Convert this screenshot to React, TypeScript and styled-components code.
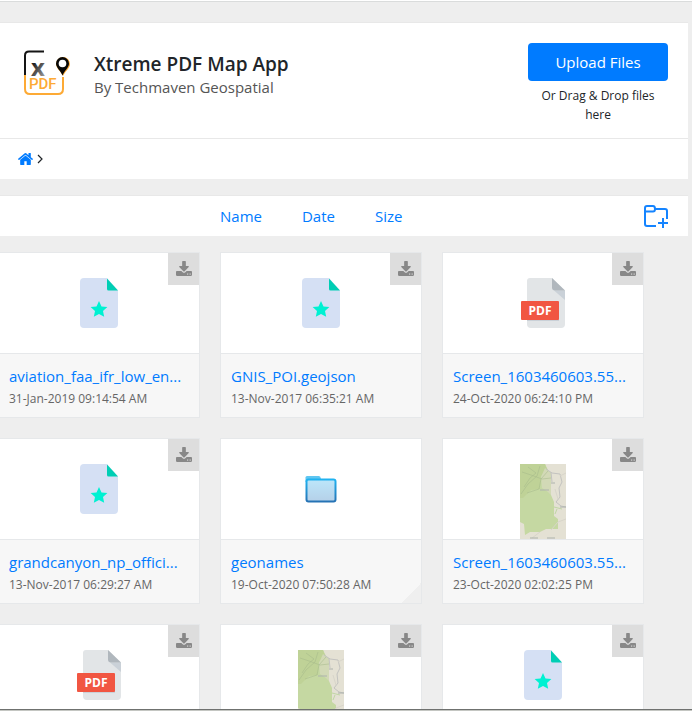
import React from "react";
import styled, { createGlobalStyle } from "styled-components";

const GlobalStyle = createGlobalStyle`
  * { box-sizing: border-box; }
  body {
    margin: 0;
    background: #eee;
    color: #212529;
    font-family: "Segoe UI", "Open Sans", "Noto Sans", sans-serif;
    font-size: 15px;
    line-height: 24px;
  }
  a { color: #007bff; text-decoration: none; }
  svg { display: block; }
`;

const Frame = styled.div`
  height: 100vh;
  display: flex;
  flex-direction: column;
  border-top: 1px solid #fff;
  background: #eee;
`;

const Page = styled.main`
  flex: 1;
  min-height: 0;
  overflow-x: hidden;
  overflow-y: auto;
  scrollbar-width: none;
  border-top: 1px solid #dadcdc;
  border-bottom: 1px solid #6f716f;
  padding-top: 20px;
`;

const StatusEdge = styled.footer`
  height: 1px;
  background: #c4c6c2;
`;

const Panel = styled.section`
  margin-right: 4px;
  margin-bottom: 16px;
  background: #fff;
  border-top: 1px solid #e8e8e8;
`;

const Header = styled.header`
  display: flex;
  align-items: flex-start;
  padding: 20px 20px 14px;
`;

const LogoBox = styled.div`
  width: 50px;
  margin-top: 6px;
  margin-right: 24px;
`;

const Heading = styled.div`
  flex: 1;
  padding-top: 9px;
`;

const Title = styled.h1`
  margin: 0;
  font-size: 19px;
  line-height: 24px;
  font-weight: 600;
`;

const Subtitle = styled.p`
  margin: 0;
  line-height: 22px;
  color: #555;
`;

const UploadColumn = styled.div`
  width: 140px;
  text-align: center;
`;

const UploadButton = styled.button`
  display: block;
  width: 100%;
  height: 38px;
  border: 0;
  border-radius: 4px;
  background: #007bff;
  color: #fff;
  font: inherit;
  cursor: pointer;
`;

const UploadHint = styled.p`
  margin: 5px 0 0;
  padding: 0 8px;
  font-size: 12px;
  line-height: 19px;
`;

const Breadcrumb = styled.nav`
  display: flex;
  align-items: center;
  gap: 4px;
  height: 41px;
  padding: 0 18px;
  border-top: 1px solid #e8e8e8;
`;

const Toolbar = styled.div`
  display: flex;
  align-items: center;
  height: 40px;
  padding: 0 20px 0 220px;
`;

const SortLinks = styled.nav`
  flex: 1;
  display: flex;
  gap: 40px;
`;

const IconButton = styled.button`
  padding: 0;
  border: 0;
  background: none;
  cursor: pointer;
`;

const Grid = styled.ul`
  display: grid;
  grid-template-columns: repeat(auto-fill, 202px);
  gap: 20px;
  margin: 0 0 20px -2px;
  padding: 0;
  list-style: none;
`;

const Card = styled.li`
  position: relative;
  border: 1px solid #e6e8ea;
  background: #fff;
`;

const Preview = styled.div`
  display: flex;
  align-items: flex-start;
  justify-content: center;
  height: 100px;
  padding-top: 25px;
  overflow: hidden;
`;

const Caption = styled.div<{ $folded: boolean }>`
  height: 64px;
  padding: 10px 10px 0;
  border-top: 1px solid #e6e8ea;
  background: ${(p) =>
    p.$folded ? "linear-gradient(135deg, transparent 50%, #efefef 50%) right bottom / 20px 20px no-repeat #f7f7f7" : "#f7f7f7"};
`;

const FileName = styled.a`
  display: block;
  overflow: hidden;
  white-space: nowrap;
`;

const FileDate = styled.time`
  display: block;
  font-size: 12px;
  line-height: 22px;
  color: #666;
`;

const DownloadButton = styled.button`
  position: absolute;
  top: 0;
  right: 0;
  display: flex;
  align-items: flex-start;
  justify-content: center;
  width: 31px;
  height: 32px;
  padding: 8px 0 0;
  border: 0;
  background: #ddd;
  color: #888;
  cursor: pointer;
`;

const Logo = () => (
  <svg width="50" height="50" viewBox="0 0 50 50" role="img" aria-label="Xtreme PDF">
    <defs>
      <linearGradient id="letter" x1="0" y1="0" x2="0.6" y2="1">
        <stop offset="0.4" stopColor="#222" />
        <stop offset="1" stopColor="#999" />
      </linearGradient>
    </defs>
    <path d="M5 26V6.5Q5 2.500 9 2.500H24" fill="none" stroke="#151515" strokeWidth="2" />
    <text x="11" y="27" fontFamily="Open Sans" fontWeight="700" fontSize="24" fill="url(#letter)">x</text>
    <path d="M5 26V40Q5 45 10 45H38Q43 45 43 40V28" fill="none" stroke="#fdaa35" strokeWidth="2" />
    <text x="9" y="40" fontFamily="Roboto" fontWeight="500" fontSize="15" fill="#fdaa35">PDF</text>
    <path d="M43 8a7 7 0 0 0-7 7c0 4 4.500 7 7 12 2.500-5 7-8 7-12a7 7 0 0 0-7-7z" fill="#fdaa35" />
    <path d="M42.500 8a6.500 6.500 0 0 0-6.500 6.500c0 4 4.500 7 6.500 12 2-5 6.500-8 6.500-12A6.500 6.500 0 0 0 42.500 8z" fill="#080808" />
    <circle cx="42.500" cy="14.500" r="3.800" fill="#fff" />
  </svg>
);

const HomeIcon = () => (
  <svg width="15" height="12" viewBox="84 256 1624 1280" fill="currentColor">
    <path d="M1472 992v480q0 26-19 45t-45 19h-384v-384h-256v384h-384q-26 0-45-19t-19-45v-480q0-1 .5-3t.5-3l575-474 575 474q1 2 1 6zm223-69l-62 74q-8 9-21 11h-3q-13 0-21-7l-692-577-692 577q-12 8-24 7-13-2-21-11l-62-74q-8-10-7-23.5t11-21.5l719-599q32-26 76-26t76 26l244 204v-195q0-14 9-23t23-9h192q14 0 23 9t9 23v408l219 182q10 8 11 21.5t-7 23.5z" />
  </svg>
);

const ChevronIcon = () => (
  <svg width="6" height="10" viewBox="0 0 6 10" fill="none" stroke="#212529" strokeWidth="1.2">
    <path d="M1 1l4 4-4 4" />
  </svg>
);

const DownloadIcon = () => (
  <svg width="16" height="15" viewBox="64 0 1664 1536" fill="currentColor">
    <path d="M1344 1344q0-26-19-45t-45-19-45 19-19 45 19 45 45 19 45-19 19-45zm256 0q0-26-19-45t-45-19-45 19-19 45 19 45 45 19 45-19 19-45zm128-224v320q0 40-28 68t-68 28h-1472q-40 0-68-28t-28-68v-320q0-40 28-68t68-28h465l135 136q58 56 136 56t136-56l136-136h464q40 0 68 28t28 68zm-325-569q17 41-14 70l-448 448q-18 19-45 19t-45-19l-448-448q-31-29-14-70 17-39 59-39h256v-448q0-26 19-45t45-19h256q26 0 45 19t19 45v448h256q42 0 59 39z" />
  </svg>
);

const NewFolderIcon = () => (
  <svg width="24" height="24" viewBox="0 0 24 24" fill="none" stroke="#1584ff" strokeWidth="2">
    <path d="M12 22H3Q1 22 1 20V4Q1 2 3 2H9Q11 2 11 5H21Q23 5 23 7V15" />
    <path d="M1 7.500H9Q11 7.500 11 5M14 19H24M19 14V24" />
  </svg>
);

const StarFile = () => (
  <svg width="38" height="50" viewBox="0 0 38 50">
    <path d="M4 0H27L38 12.500V46Q38 50 34 50H4Q0 50 0 46V4Q0 0 4 0Z" fill="#d5e0f4" />
    <path d="M27 0.500L38 12.500H28.500Q27 12.500 27 11Z" fill="#00ceb4" />
    <path d="M19 23l2.500 5.400 5.900.6-4.400 4 1.200 5.800-5.200-2.900-5.200 2.900 1.200-5.800-4.400-4 5.900-.6z" fill="#00f1d2" />
  </svg>
);

const PdfFile = () => (
  <svg width="44" height="50" viewBox="0 0 44 50">
    <path d="M9 0H31L44 12.500V46Q44 50 40 50H10Q6 50 6 46V3Q6 0 9 0Z" fill="#e2e5e7" />
    <path d="M33 12.500H44V22Z" fill="#cad1d8" />
    <path d="M31 0L44 12.500H34Q31 12.500 31 9.500Z" fill="#b0b7bd" />
    <path d="M6 42H36L38 40V43H6Z" fill="#cad1d8" />
    <rect y="23" width="38" height="19" rx="1" fill="#f15642" />
    <text x="19" y="37" textAnchor="middle" fontFamily="Open Sans" fontWeight="700" fontSize="12" fill="#fff">PDF</text>
  </svg>
);

const FolderDrawing = () => (
  <svg width="38" height="50" viewBox="0 0 38 50">
    <defs>
      <linearGradient id="rim" x1="0" y1="0" x2="0" y2="1">
        <stop offset="0" stopColor="#20b2f0" />
        <stop offset="1" stopColor="#2673b5" />
      </linearGradient>
      <linearGradient id="face" x1="0" y1="0" x2="0" y2="1">
        <stop offset="0" stopColor="#bce6fa" />
        <stop offset="1" stopColor="#b5d0e8" />
      </linearGradient>
    </defs>
    <path d="M3.500 18V13.500Q3.500 12 5 12H17Q18.500 12 19 15V18Z" fill="#5fc6f1" />
    <rect x="4.500" y="15.500" width="29" height="22" rx="2" fill="url(#face)" stroke="url(#rim)" strokeWidth="2" />
  </svg>
);

const MapThumb = () => (
  <svg width="46" height="92" viewBox="0 0 46 92">
    <path d="M0 0H46V92H0Z" fill="#e4e1d4" />
    <path d="M0 0H25L28 6 31 9V31L34 38V52L38 55V65H26L20 68H10L5 71 4 60 0 58Z" fill="#c5d8a2" />
    <path d="M0 0H25L27 6 21 12 20 25 11 26 3 34H0Z" fill="#bdd195" opacity="0.8" />
    <path d="M25 4l6 5v22l-3-3-6-4-1-11z" fill="#d2d9b6" />
    <path d="M8 3l8 6-6 5-6 9M20 2l-3 10-9 8-7 10M28 7l-7 8-2 10-12 4M2 8l9 3 11 4 9-1" fill="none" stroke="#a3b889" strokeWidth="1" opacity="0.5" />
    <path d="M26 5l6 4 8 1 2 8-3 6 1 9-4 5 5 4 5 1M31 8l1 10" fill="none" stroke="#c3c3c0" strokeWidth="1" />
    <path d="M40 12l6-3M31 66l7-8 8-3M35 25l3 10M12 74l8-6" fill="none" stroke="#d8d5ca" strokeWidth="1" />
    <path d="M20 26h9M31 19h4M10 74h8M27 74h8M40 43h6" stroke="#adb2ad" strokeWidth="1" />
    <path d="M34 43l8 2M37 45l-2 5" stroke="#c0d6a4" strokeWidth="1" />
  </svg>
);

type Kind = "star" | "pdf" | "folder" | "map";

const drawings: Record<Kind, React.ComponentType> = {
  star: StarFile,
  pdf: PdfFile,
  folder: FolderDrawing,
  map: MapThumb,
};

const files: { name: string; date: string; kind: Kind }[] = [
  { name: "aviation_faa_ifr_low_en...", date: "31-Jan-2019 09:14:54 AM", kind: "star" },
  { name: "GNIS_POI.geojson", date: "13-Nov-2017 06:35:21 AM", kind: "star" },
  { name: "Screen_1603460603.55...", date: "24-Oct-2020 06:24:10 PM", kind: "pdf" },
  { name: "grandcanyon_np_offici...", date: "13-Nov-2017 06:29:27 AM", kind: "star" },
  { name: "geonames", date: "19-Oct-2020 07:50:28 AM", kind: "folder" },
  { name: "Screen_1603460603.55...", date: "23-Oct-2020 02:02:25 PM", kind: "map" },
  { name: "", date: "", kind: "pdf" },
  { name: "", date: "", kind: "map" },
  { name: "", date: "", kind: "star" },
];

export default function App() {
  return (
    <Frame>
      <GlobalStyle />
      <Page>
        <Panel>
          <Header>
            <LogoBox><Logo /></LogoBox>
            <Heading>
              <Title>Xtreme PDF Map App</Title>
              <Subtitle>By Techmaven Geospatial</Subtitle>
            </Heading>
            <UploadColumn>
              <UploadButton type="button">Upload Files</UploadButton>
              <UploadHint>Or Drag &amp; Drop files here</UploadHint>
            </UploadColumn>
          </Header>
          <Breadcrumb aria-label="Breadcrumb">
            <a href="#home" aria-label="Home"><HomeIcon /></a>
            <ChevronIcon />
          </Breadcrumb>
        </Panel>
        <Panel>
          <Toolbar>
            <SortLinks aria-label="Sort by">
              <a href="#name">Name</a>
              <a href="#date">Date</a>
              <a href="#size">Size</a>
            </SortLinks>
            <IconButton type="button" aria-label="New folder"><NewFolderIcon /></IconButton>
          </Toolbar>
        </Panel>
        <Grid>
          {files.map((file, i) => {
            const Drawing = drawings[file.kind];
            return (
              <Card key={i}>
                <Preview><Drawing /></Preview>
                {file.kind !== "folder" && (
                  <DownloadButton type="button" aria-label="Download"><DownloadIcon /></DownloadButton>
                )}
                <Caption $folded={file.kind === "folder"}>
                  {file.name && <FileName href="#file">{file.name}</FileName>}
                  {file.date && <FileDate>{file.date}</FileDate>}
                </Caption>
              </Card>
            );
          })}
        </Grid>
      </Page>
      <StatusEdge />
    </Frame>
  );
}
